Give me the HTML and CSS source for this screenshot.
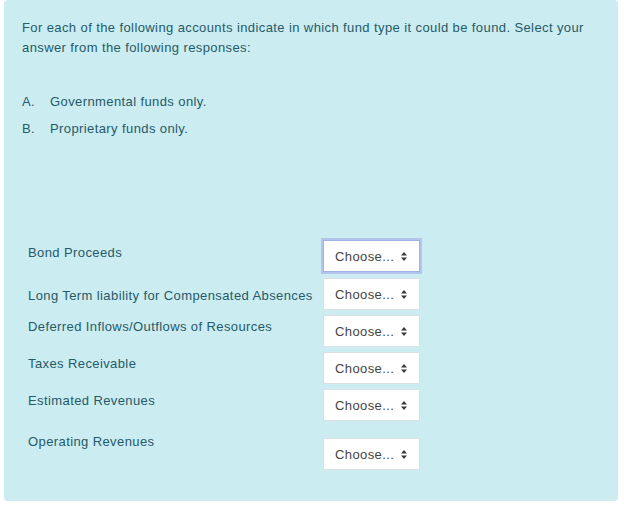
FILE: index.html
```html
<!doctype html>
<html lang="en">
	<head>
		<meta charset="utf-8">
		<title>Match question</title>
		<meta name="viewport" content="width=device-width, initial-scale=1.0">
		<link rel="stylesheet" href="styles.css">
	</head>
	<body>
	<div class="formulation">
		<p class="qtext">For each of the following accounts indicate in which fund type it could be found. Select your answer from the following responses:</p>
		<ul class="responses">
			<li><span class="letter">A.</span>Governmental funds only.</li>
			<li><span class="letter">B.</span>Proprietary funds only.</li>
		</ul>

		<div class="answers">
			<div class="row first">
				<label class="text t3">Bond Proceeds</label>
				<span class="control focus">
					<select><option>Choose...</option><option>A</option><option>B</option></select>
					<svg class="arrow" width="6" height="9" viewBox="0 0 6 9"><path d="M3 0L6 3.6H0z M3 9L0 5.4h6z" fill="#3a3a3a"/></svg>
				</span>
			</div>
			<div class="row">
				<label class="text t8">Long Term liability for Compensated Absences</label>
				<span class="control">
					<select><option>Choose...</option><option>A</option><option>B</option></select>
					<svg class="arrow" width="6" height="9" viewBox="0 0 6 9"><path d="M3 0L6 3.6H0z M3 9L0 5.4h6z" fill="#3a3a3a"/></svg>
				</span>
			</div>
			<div class="row">
				<label class="text">Deferred Inflows/Outflows of Resources</label>
				<span class="control">
					<select><option>Choose...</option><option>A</option><option>B</option></select>
					<svg class="arrow" width="6" height="9" viewBox="0 0 6 9"><path d="M3 0L6 3.6H0z M3 9L0 5.4h6z" fill="#3a3a3a"/></svg>
				</span>
			</div>
			<div class="row">
				<label class="text">Taxes Receivable</label>
				<span class="control">
					<select><option>Choose...</option><option>A</option><option>B</option></select>
					<svg class="arrow" width="6" height="9" viewBox="0 0 6 9"><path d="M3 0L6 3.6H0z M3 9L0 5.4h6z" fill="#3a3a3a"/></svg>
				</span>
			</div>
			<div class="row">
				<label class="text">Estimated Revenues</label>
				<span class="control">
					<select><option>Choose...</option><option>A</option><option>B</option></select>
					<svg class="arrow" width="6" height="9" viewBox="0 0 6 9"><path d="M3 0L6 3.6H0z M3 9L0 5.4h6z" fill="#3a3a3a"/></svg>
				</span>
			</div>
			<div class="row last">
				<label class="text t0">Operating Revenues</label>
				<span class="control low">
					<select><option>Choose...</option><option>A</option><option>B</option></select>
					<svg class="arrow" width="6" height="9" viewBox="0 0 6 9"><path d="M3 0L6 3.6H0z M3 9L0 5.4h6z" fill="#3a3a3a"/></svg>
				</span>
			</div>
		</div>
	</div>
	</body>
</html>
```

FILE: styles.css
```css
*{margin: 0;padding: 0;box-sizing: border-box;}
ul li{list-style: none;}

body{
	background: #fff;
	font-family: "Liberation Sans", Arial, sans-serif;
	font-size: 13px;
	line-height: 20px;
	letter-spacing: 0.4px;
	color: #265a68;
}
.formulation{
	width: 614px;
	height: 501px;
	margin-left: 4px;
	padding: 18px 18px 0 18px;
	background: #cbecf1;
	border-radius: 4px;
}
.responses{
	margin-top: 34px;
}
.responses li{
	margin-bottom: 7px;
}
.responses li .letter{
	display: inline-block;
	width: 28px;
}

.answers{
	margin-top: 101px;
	padding-left: 6px;
}
.answers .row{
	display: flex;
	align-items: flex-start;
	margin-bottom: 5px;
}
.answers .row.first{
	margin-bottom: 6px;
}
.answers .row.last{
	margin-top: 11px;
}
.answers .text{
	width: 295px;
	padding-top: 2px;
}
.answers .text.t0{padding-top: 0;}
.answers .text.t3{padding-top: 3px;}
.answers .text.t8{padding-top: 8px;}

.control{
	position: relative;
	display: block;
	width: 97px;
	height: 32px;
}
.control.low{
	margin-top: 6px;
}
.control select{
	-webkit-appearance: none;
	appearance: none;
	width: 97px;
	height: 32px;
	padding: 0 0 0 11px;
	border: 1px solid #dadfe3;
	border-radius: 0;
	background: #fff;
	font-family: "Liberation Sans", Arial, sans-serif;
	font-size: 13px;
	letter-spacing: 0.4px;
	color: #444;
	outline: none;
}
.control.focus select{
	border-color: #9fb2e2;
	box-shadow: 0 0 0 2px #b4c4ec;
}
.control .arrow{
	position: absolute;
	right: 13px;
	top: 12px;
	pointer-events: none;
}
```
